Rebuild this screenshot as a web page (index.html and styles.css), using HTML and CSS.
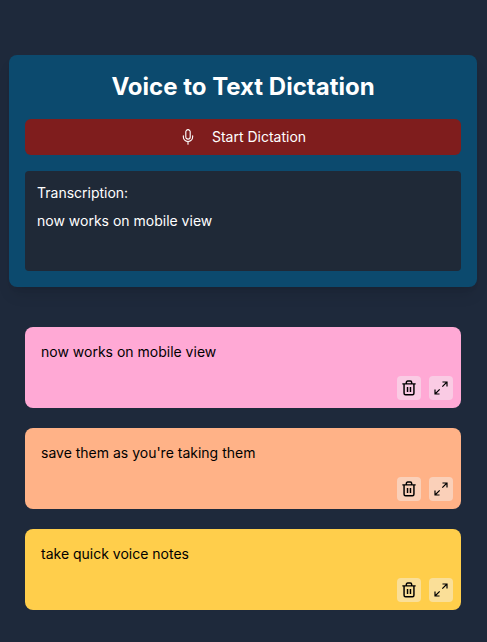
FILE: index.html
```html
<!DOCTYPE html>
<html lang="en">
<head>
<meta charset="utf-8">
<meta name="viewport" content="width=device-width, initial-scale=1">
<title>Voice to Text Dictation</title>
<link rel="stylesheet" href="styles.css">
</head>
<body>
<svg class="sprite" aria-hidden="true">
  <symbol id="trash" viewBox="0 0 24 24">
    <path d="M2 5.800h20M8 5.800V3.600a2 2 0 0 1 2-2h4a2 2 0 0 1 2 2V5.800M4.600 5.800V20a2.200 2.200 0 0 0 2.200 2.200h10.400a2.200 2.200 0 0 0 2.200-2.200V5.800M9.800 10.500v7.500M14.200 10.500v7.500"/>
  </symbol>
  <symbol id="expand" viewBox="0 0 24 24">
    <path d="M14.200 3H21v6.800M21 3l-7 7M9.800 21H3v-6.800M3 21l7-7"/>
  </symbol>
</svg>
<main class="page">
  <section class="panel">
    <h1 class="title">Voice to Text Dictation</h1>
    <button class="start" type="button">
      <svg class="mic" viewBox="0 0 24 24" aria-hidden="true">
        <path d="M12 18.750a7 7 0 0 0 7-7v-1.500M12 18.750a7 7 0 0 1-7-7v-1.500M12 18.750v4M12 15.250a3.300 3.300 0 0 1-3.300-3.300V4.300a3.300 3.300 0 1 1 6.600 0v7.650a3.300 3.300 0 0 1-3.300 3.300Z"/>
      </svg>
      <span>Start Dictation</span>
    </button>
    <div class="transcript">
      <h2 class="label">Transcription:</h2>
      <p class="spoken">now works on mobile view</p>
    </div>
  </section>
  <section class="notes">
    <article class="note pink">
      <p class="text">now works on mobile view</p>
      <div class="actions">
        <button class="action" type="button" aria-label="Delete"><svg class="icon bold"><use href="#trash"/></svg></button>
        <button class="action" type="button" aria-label="Expand"><svg class="icon"><use href="#expand"/></svg></button>
      </div>
    </article>
    <article class="note orange">
      <p class="text">save them as you're taking them</p>
      <div class="actions">
        <button class="action" type="button" aria-label="Delete"><svg class="icon bold"><use href="#trash"/></svg></button>
        <button class="action" type="button" aria-label="Expand"><svg class="icon"><use href="#expand"/></svg></button>
      </div>
    </article>
    <article class="note yellow">
      <p class="text">take quick voice notes</p>
      <div class="actions">
        <button class="action" type="button" aria-label="Delete"><svg class="icon bold"><use href="#trash"/></svg></button>
        <button class="action" type="button" aria-label="Expand"><svg class="icon"><use href="#expand"/></svg></button>
      </div>
    </article>
  </section>
</main>
</body>
</html>
```
FILE: styles.css
```css
* {
  box-sizing: border-box;
  margin: 0;
}

body {
  background: #1e293b;
  font-family: Inter, sans-serif;
  font-size: 14px;
  line-height: 20px;
}

button {
  border: 0;
  font: inherit;
  cursor: pointer;
}

.sprite {
  position: absolute;
  width: 0;
  height: 0;
}

.page {
  padding: 55px 10px 24px 9px;
}

.panel {
  display: flex;
  flex-direction: column;
  gap: 16px;
  padding: 16px;
  border-radius: 8px;
  background: #0c4a6e;
  color: #fff;
  box-shadow: 0 10px 15px -3px rgba(0, 0, 0, 0.1), 0 4px 6px -4px rgba(0, 0, 0, 0.1);
}

.title {
  font-size: 24px;
  line-height: 32px;
  font-weight: 700;
  text-align: center;
}

.start {
  display: flex;
  align-items: center;
  justify-content: center;
  gap: 16px;
  padding: 8px 16px;
  border-radius: 6px;
  background: #7f1d1d;
  color: #fff;
}

.mic {
  width: 16px;
  height: 16px;
  fill: none;
  stroke: currentColor;
  stroke-width: 1.7;
  stroke-linecap: round;
  stroke-linejoin: round;
}

.transcript {
  min-height: 100px;
  padding: 12px;
  border-radius: 4px;
  background: #1f2937;
}

.label {
  margin-bottom: 8px;
  font-size: 14px;
  font-weight: 400;
}

.notes {
  display: flex;
  flex-direction: column;
  gap: 20px;
  padding: 40px 16px 0;
}

.note {
  display: flex;
  flex-direction: column;
  justify-content: space-between;
  gap: 14px;
  padding: 15px 8px 8px 16px;
  border-radius: 8px;
  color: #000;
}

.pink {
  background: #ffa9d5;
}

.orange {
  background: #ffb287;
}

.yellow {
  background: #ffce4b;
}

.actions {
  display: flex;
  justify-content: flex-end;
  gap: 8px;
}

.action {
  display: flex;
  padding: 4px;
  border-radius: 4px;
  background: rgba(243, 244, 246, 0.45);
  color: #000;
}

.icon {
  width: 16px;
  height: 16px;
  fill: none;
  stroke: currentColor;
  stroke-width: 1.8;
}

.bold {
  stroke-width: 2.2;
  stroke-linejoin: round;
}
```
